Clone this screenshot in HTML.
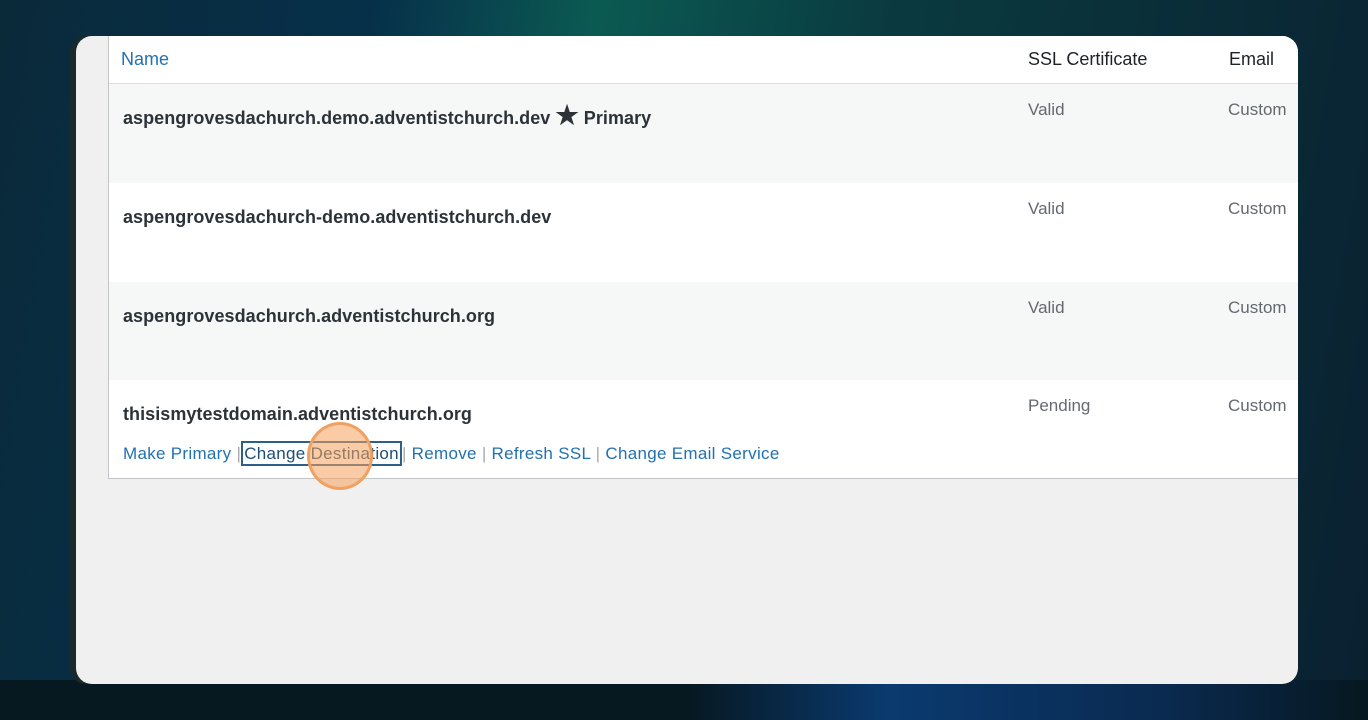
<!DOCTYPE html>
<html><head><style>
body{margin:0;width:1368px;height:720px;overflow:hidden;background:linear-gradient(100deg,#0a2a3a 0%,#06304a 25%,#0b5a52 40%,#0a3a40 60%,#0a2030 100%);font-family:"Liberation Sans",sans-serif;position:relative}
.bot{position:absolute;left:0;right:0;bottom:0;height:40px;background:linear-gradient(90deg,#061820 0%,#061820 50%,#0a3a70 65%,#0a2a50 85%,#061820 100%)}
.card{position:absolute;left:76px;top:36px;width:1222px;height:648px;background:#f0f0f1;border-radius:16px;overflow:hidden;box-shadow:-6px 0 0 #1a2a2a}
.tbl{position:absolute;left:32px;top:0;right:0;height:442px;border-left:1px solid #c3c4c7;border-bottom:1px solid #c3c4c7;background:#fff}
.row{position:absolute;left:0;right:0}
.hdr{top:0;height:47px;border-bottom:1px solid #dcdcde;background:#fff}
.t{position:absolute;font-size:18px;white-space:nowrap}
.b{color:#2c3338;font-weight:bold;font-size:18px;letter-spacing:0.05px}
.g{color:#646970;font-size:17px}
.lnk{color:#2271b1;font-size:17px;letter-spacing:0.3px}
.sep{color:#a7aaad}
</style></head><body>
<div class="bot"></div>
<div class="card">
<div class="tbl">
 <div class="row hdr">
  <div class="t" style="left:12px;top:13px;color:#2271b1">Name</div>
  <div class="t" style="left:919px;top:13px;color:#1d2327">SSL Certificate</div>
  <div class="t" style="left:1120px;top:13px;color:#1d2327">Email</div>
 </div>
 <div class="row" style="top:48px;height:99px;background:#f6f7f7">
  <div class="t b" style="left:14px;top:22px">aspengrovesdachurch.demo.adventistchurch.dev <span style="font-size:26px;line-height:18px">★</span> Primary</div>
  <div class="t g" style="left:919px;top:16px">Valid</div><div class="t g" style="left:1119px;top:16px">Custom</div>
 </div>
 <div class="row" style="top:147px;height:99px;background:#fff">
  <div class="t b" style="left:14px;top:24px">aspengrovesdachurch-demo.adventistchurch.dev</div>
  <div class="t g" style="left:919px;top:16px">Valid</div><div class="t g" style="left:1119px;top:16px">Custom</div>
 </div>
 <div class="row" style="top:246px;height:98px;background:#f6f7f7">
  <div class="t b" style="left:14px;top:24px">aspengrovesdachurch.adventistchurch.org</div>
  <div class="t g" style="left:919px;top:16px">Valid</div><div class="t g" style="left:1119px;top:16px">Custom</div>
 </div>
 <div class="row" style="top:344px;height:98px;background:#fff">
  <div class="t b" style="left:14px;top:24px">thisismytestdomain.adventistchurch.org</div>
  <div class="t g" style="left:919px;top:16px">Pending</div><div class="t g" style="left:1119px;top:16px">Custom</div>
  <div class="t lnk" style="left:14px;top:64px">Make Primary <span class="sep">|</span><span style="border:2px solid #2c5f8a;padding:1px 1px;color:#1d4e75">Change Destination</span><span class="sep">|</span> Remove <span class="sep">|</span> Refresh SSL <span class="sep">|</span> Change Email Service</div>
 </div>
</div>
<div style="position:absolute;left:231px;top:386px;width:60px;height:62px;border-radius:50%;background:rgba(245,160,90,.55);border:3px solid #f0a060"></div>
</div>
</body></html>
